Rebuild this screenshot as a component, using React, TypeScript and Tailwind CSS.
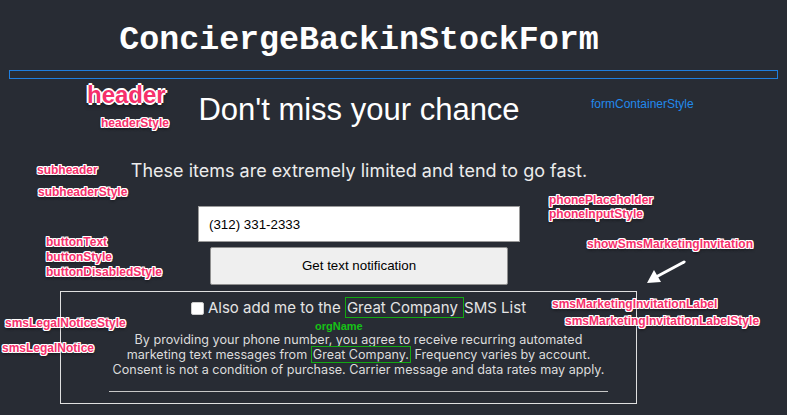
import React from 'react';

const tag =
  'absolute whitespace-nowrap font-bold text-[12px] leading-[14px] text-[#f5306b] [font-family:"Liberation_Sans",Arial,sans-serif] [text-shadow:1px_0_0_#fff,-1px_0_0_#fff,0_1px_0_#fff,0_-1px_0_#fff,1px_1px_0_#fff,-1px_-1px_0_#fff,1px_-1px_0_#fff,-1px_1px_0_#fff,0_2px_3px_rgba(0,0,0,0.7)]';

const notes: { text: string; x: number; y: number }[] = [
  { text: 'headerStyle', x: 101, y: 116 },
  { text: 'subheader', x: 37, y: 163 },
  { text: 'subheaderStyle', x: 38, y: 185 },
  { text: 'buttonText', x: 46, y: 235 },
  { text: 'buttonStyle', x: 46, y: 250 },
  { text: 'buttonDisabledStyle', x: 46, y: 265 },
  { text: 'phonePlaceholder', x: 549, y: 193 },
  { text: 'phoneInputStyle', x: 549, y: 207 },
  { text: 'showSmsMarketingInvitation', x: 587, y: 237 },
  { text: 'smsMarketingInvitationLabel', x: 552, y: 297 },
  { text: 'smsMarketingInvitationLabelStyle', x: 565, y: 314 },
  { text: 'smsLegalNoticeStyle', x: 5, y: 316 },
  { text: 'smsLegalNotice', x: 2, y: 341 },
];

export default function App() {
  return (
    <div className="relative w-full h-[415px] overflow-hidden bg-[#282c34] text-white">
      <div className="flex flex-col items-center w-[718px]">
        <h1 className="mt-[22px] text-[33.3px] leading-[36px] font-bold [font-family:'Liberation_Mono','Courier_New',monospace]">
          ConciergeBackinStockForm
        </h1>
      </div>

      <div className="mt-[12px] mx-[9px] h-[9px] border border-[#1f7fe0]" />

      <div className="flex flex-col items-center w-[718px] [font-family:Inter,sans-serif]">
        <h2 className="mt-[13px] text-[31px] leading-[36px] font-normal [font-family:'Liberation_Sans',Arial,sans-serif]">
          Don't miss your chance
        </h2>
        <p className="mt-[31px] text-[18px] leading-[24px] text-[#ececec]">
          These items are extremely limited and tend to go fast.
        </p>

        <input
          className="mt-[23px] w-[322px] h-[36px] px-[10px] bg-white text-black border border-[#9a9a9a] text-[13.33px] [font-family:'Liberation_Sans',Arial,sans-serif] outline-none"
          defaultValue="(312) 331-2333"
        />
        <button className="mt-[5px] w-[298px] h-[38px] bg-[#efefef] text-black border border-[#8f8f8f] rounded-[2px] text-[13.33px] [font-family:'Liberation_Sans',Arial,sans-serif]">
          Get text notification
        </button>

        <div className="mt-[6px] self-start ml-[60px] w-[577px] h-[113px] pl-[20px] border border-[#e0e0e0] flex flex-col">
          <label className="mt-[6px] flex items-center justify-center gap-[4px] text-[15px] leading-[20px] text-[#e4e4e4]">
            <input
              type="checkbox"
              className="appearance-none w-[13px] h-[13px] bg-white rounded-[2px] border border-[#ccc]"
            />
            <span>
              Also add me to the{' '}
              <span className="border border-[#12a812] px-[1px]">Great Company </span>SMS List
            </span>
          </label>
          <p className="mt-[14px] text-center text-[12.6px] leading-[15px] text-[#dcdcdc]">
            By providing your phone number, you agree to receive recurring automated
            <br />
            marketing text messages from{' '}
            <span className="border border-[#12a812] px-[1px]">Great Company.</span> Frequency varies by account.
            <br />
            Consent is not a condition of purchase. Carrier message and data rates may apply.
          </p>
          <div className="mt-[14px] ml-[28px] w-[499px] h-px bg-[#c8c8c8]" />
        </div>
      </div>

      <span className="absolute left-[87px] top-[82px] whitespace-nowrap font-bold text-[24px] leading-[26px] text-[#f5306b] [font-family:'Liberation_Sans',Arial,sans-serif] [text-shadow:1px_0_0_#fff,-1px_0_0_#fff,0_1px_0_#fff,0_-1px_0_#fff,2px_0_0_#fff,-2px_0_0_#fff,0_2px_0_#fff,0_-2px_0_#fff,0_3px_4px_rgba(0,0,0,0.7)]">
        header
      </span>
      {notes.map((n) => (
        <span key={n.text} className={tag} style={{ left: n.x, top: n.y }}>
          {n.text}
        </span>
      ))}
      <span className="absolute left-[591px] top-[97px] text-[12px] leading-[14px] text-[#2289ec] [font-family:'Liberation_Sans',Arial,sans-serif]">
        formContainerStyle
      </span>
      <span className="absolute left-[315px] top-[319px] text-[11px] leading-[14px] font-bold text-[#16c216] [font-family:'Liberation_Sans',Arial,sans-serif]">
        orgName
      </span>

      <svg className="absolute left-[640px] top-[255px]" width="52" height="34" viewBox="0 0 52 34">
        <line x1="44" y1="7" x2="16" y2="22" stroke="white" strokeWidth="3" strokeLinecap="round" />
        <polygon points="7,28 14,15 21,27" fill="white" />
      </svg>
    </div>
  );
}
